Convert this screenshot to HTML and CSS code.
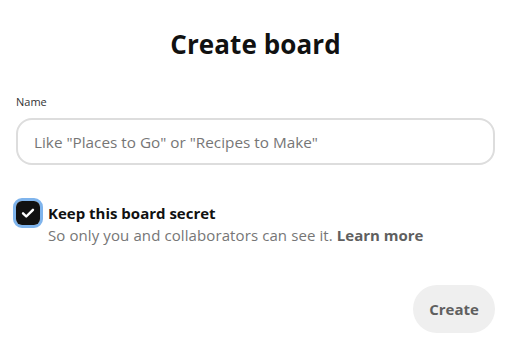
FILE: index.html
```html
<!DOCTYPE html>
<html>
<head>
<meta charset="utf-8">
<link rel="stylesheet" href="styles.css">
</head>
<body>
<div class="dialog">
  <h1 class="title">Create board</h1>
  <label class="label" for="name">Name</label>
  <div class="input">Like "Places to Go" or "Recipes to Make"</div>
  <div class="secret">
    <div class="check">
      <div class="box">
        <svg width="14" height="14" viewBox="0 0 24 24"><path d="M3.5 12.5l5.5 5.5L20.5 6.5" fill="none" stroke="#fff" stroke-width="4.2" stroke-linecap="round" stroke-linejoin="round"/></svg>
      </div>
    </div>
    <div class="secret-text">
      <div class="secret-title">Keep this board secret</div>
      <div class="secret-sub">So only you and collaborators can see it. <b class="learn">Learn more</b></div>
    </div>
  </div>
  <div class="actions">
    <div class="create">Create</div>
  </div>
</div>
</body>
</html>
```
FILE: styles.css
```css
html, body {
  margin: 0;
  padding: 0;
  background: #fff;
}
body {
  font-family: "Open Sans", "Noto Sans", sans-serif;
  color: #111;
}
.dialog {
  width: 512px;
  height: 353px;
  box-sizing: border-box;
  padding: 24px 17px 0 16px;
  display: flex;
  flex-direction: column;
}
.title {
  margin: 0;
  text-align: center;
  font-size: 26px;
  font-weight: 700;
  line-height: 40px;
  letter-spacing: 0.1px;
}
.label {
  margin-top: 31px;
  font-size: 11px;
  line-height: 14px;
  color: #333;
}
.input {
  margin-top: 9px;
  height: 47px;
  box-sizing: border-box;
  border: 2px solid #ddd;
  border-radius: 16px;
  padding: 0 16px;
  display: flex;
  align-items: center;
  font-size: 15.3px;
  color: #767676;
}
.secret {
  margin-top: 33px;
  display: flex;
  align-items: flex-start;
  gap: 5px;
}
.check {
  width: 30px;
  height: 30px;
  box-sizing: border-box;
  border: 3px solid #7fb4ec;
  border-radius: 9px;
  display: flex;
  align-items: center;
  justify-content: center;
  flex-shrink: 0;
  margin-left: -3px;
}
.box {
  width: 24px;
  height: 24px;
  background: #111;
  border-radius: 6px;
  display: flex;
  align-items: center;
  justify-content: center;
}
.secret-text {
  padding-top: 4px;
}
.secret-title {
  font-size: 15px;
  font-weight: 700;
  line-height: 22px;
  color: #111;
}
.secret-sub {
  font-size: 15px;
  line-height: 22px;
  letter-spacing: 0.1px;
  color: #767676;
}
.learn {
  color: #5f5f5f;
  font-weight: 700;
  letter-spacing: 0;
}
.actions {
  margin-top: 39px;
  display: flex;
  justify-content: flex-end;
}
.create {
  width: 82px;
  height: 48px;
  border-radius: 24px;
  background: #efefef;
  color: #5f5f5f;
  font-weight: 700;
  font-size: 15px;
  display: flex;
  align-items: center;
  justify-content: center;
}
```
